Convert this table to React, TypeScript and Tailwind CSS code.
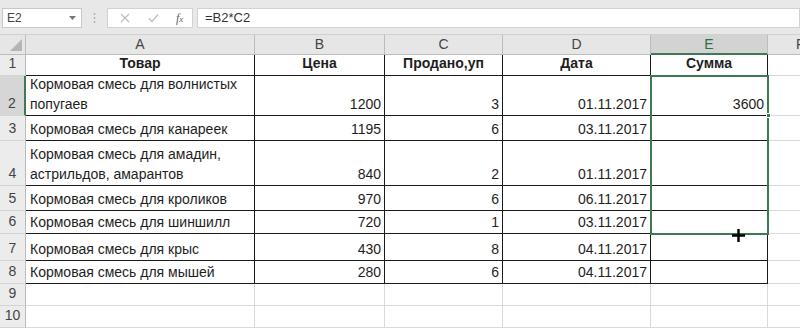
import React from "react";

const cols = ["A", "B", "C", "D", "E"];
const rowHeights = [21, 40, 25, 45, 25, 23, 27, 23, 22, 22];

type Row = { name: string[]; price: string; sold: string; date: string; sum: string };

const data: Row[] = [
  { name: ["Кормовая смесь для волнистых", "попугаев"], price: "1200", sold: "3", date: "01.11.2017", sum: "3600" },
  { name: ["Кормовая смесь для канареек"], price: "1195", sold: "6", date: "03.11.2017", sum: "" },
  { name: ["Кормовая смесь для амадин,", "астрильдов, амарантов"], price: "840", sold: "2", date: "01.11.2017", sum: "" },
  { name: ["Кормовая смесь для кроликов"], price: "970", sold: "6", date: "06.11.2017", sum: "" },
  { name: ["Кормовая смесь для шиншилл"], price: "720", sold: "1", date: "03.11.2017", sum: "" },
  { name: ["Кормовая смесь для крыс"], price: "430", sold: "8", date: "04.11.2017", sum: "" },
  { name: ["Кормовая смесь для мышей"], price: "280", sold: "6", date: "04.11.2017", sum: "" },
];

const headers = ["Товар", "Цена", "Продано,уп", "Дата", "Сумма"];

function RowHeader({ n, active }: { n: number; active?: boolean }) {
  return (
    <div
      className={`flex items-end justify-center border-b border-b-[#d4d4d4] pb-[1px] text-[14px] text-[#444] ${
        active ? "border-r-2 border-r-[#3d7a53] bg-[#d6d6d6]" : "border-r border-r-[#bcbcbc] bg-[#ececec]"
      }`}
    >
      {n}
    </div>
  );
}

export default function App() {
  const gridRows = `35px 20px ${rowHeights.map((h) => h + "px").join(" ")}`;

  return (
    <div
      className="relative h-[329px] w-[800px] overflow-hidden bg-white text-[#1e1e1e]"
      style={{ fontFamily: '"Liberation Sans", Arial, sans-serif' }}
    >
      <div
        className="grid"
        style={{ gridTemplateColumns: "26px 229px 130px 118px 148px 117px 32px", gridTemplateRows: gridRows }}
      >
        {/* Formula bar */}
        <div className="col-span-7 flex items-center gap-0 border-b border-b-[#d0d0d0] bg-[#e8e8e8] pl-[2px] pt-[1px]">
          <div className="flex h-[20px] w-[80px] items-center justify-between border border-[#c8c8c8] bg-white pl-[4px] pr-[5px] text-[12px] text-[#444]">
            <span>E2</span>
            <svg width="7" height="4" viewBox="0 0 7 4">
              <path d="M0 0h7L3.5 4z" fill="#777" />
            </svg>
          </div>
          <div className="flex w-[25px] justify-center">
            <svg width="3" height="12" viewBox="0 0 3 12">
              <circle cx="1.5" cy="2" r="0.9" fill="#aaa" />
              <circle cx="1.5" cy="6" r="0.9" fill="#aaa" />
              <circle cx="1.5" cy="10" r="0.9" fill="#aaa" />
            </svg>
          </div>
          <div className="flex h-[20px] w-[86px] items-center border border-[#d2d2d2] bg-white">
            <svg className="ml-[12px]" width="10" height="10" viewBox="0 0 10 10">
              <path d="M1 1l8 8M9 1l-8 8" stroke="#bdbdbd" strokeWidth="1.2" />
            </svg>
            <svg className="ml-[18px]" width="11" height="10" viewBox="0 0 11 10">
              <path d="M1 5.5l3 3L10 1.5" stroke="#bdbdbd" strokeWidth="1.2" fill="none" />
            </svg>
            <span className="ml-[17px] text-[12px] italic text-[#666]" style={{ fontFamily: '"Liberation Serif", serif' }}>
              f<span className="text-[9px]">x</span>
            </span>
          </div>
          <div className="ml-[4px] flex h-[20px] flex-1 items-center border border-[#d2d2d2] bg-white pl-[7px] text-[13px] text-[#333]">
            =B2*C2
          </div>
        </div>

        {/* Column headers */}
        <div className="relative border-b border-r border-[#bcbcbc] bg-[#e6e6e6]">
          <svg className="absolute bottom-[3px] right-[3px]" width="12" height="12" viewBox="0 0 12 12">
            <path d="M12 0V12H0z" fill="#b5b5b5" />
          </svg>
        </div>
        {cols.map((c) => (
          <div
            key={c}
            className={`flex items-center justify-center border-r text-[14px] ${
              c === "E"
                ? "border-b-2 border-b-[#3d7a53] border-r-[#bcbcbc] bg-[#d3d3d3] text-[#2f6f47]"
                : "border-b border-[#bcbcbc] bg-[#e6e6e6] text-[#444]"
            }`}
          >
            {c}
          </div>
        ))}
        <div className="flex items-center overflow-hidden whitespace-nowrap border-b border-[#bcbcbc] bg-[#e6e6e6] pl-[28px] text-[14px] text-[#444]">
          F
        </div>

        {/* Row 1 */}
        <RowHeader n={1} />
        {headers.map((h) => (
          <div
            key={h}
            className="flex items-end justify-center border-b border-r border-[#1a1a1a] pb-[1px] text-[14px] font-bold"
          >
            {h}
          </div>
        ))}
        <div className="border-b border-[#dadada]" />

        {/* Data rows */}
        {data.map((r, i) => (
          <React.Fragment key={i}>
            <RowHeader n={i + 2} active={i === 0} />
            <div className="flex flex-col justify-end border-b border-r border-[#1a1a1a] pb-[1px] pl-[4px] text-[14px] leading-[20px]">
              {r.name.map((l) => (
                <span key={l}>{l}</span>
              ))}
            </div>
            <div className="flex items-end justify-end border-b border-r border-[#1a1a1a] pb-[1px] pr-[3px] text-[14px] leading-[20px]">
              {r.price}
            </div>
            <div className="flex items-end justify-end border-b border-r border-[#1a1a1a] pb-[1px] pr-[3px] text-[14px] leading-[20px]">
              {r.sold}
            </div>
            <div className="flex items-end justify-end border-b border-r border-[#1a1a1a] pb-[1px] pr-[3px] text-[14px] leading-[20px]">
              {r.date}
            </div>
            <div className="flex items-end justify-end border-b border-r border-[#1a1a1a] pb-[1px] pr-[3px] text-[14px] leading-[20px]">
              {r.sum}
            </div>
            <div className="border-b border-[#dadada]" />
          </React.Fragment>
        ))}

        {/* Empty rows */}
        {[9, 10].map((n) => (
          <React.Fragment key={n}>
            <RowHeader n={n} />
            {cols.map((c) => (
              <div key={c} className="border-b border-r border-[#dadada]" />
            ))}
            <div className="border-b border-[#dadada]" />
          </React.Fragment>
        ))}
      </div>

      {/* Selection outline E2:E6 */}
      <div className="pointer-events-none absolute left-[650px] top-[75px] h-[160px] w-[119px] border-2 border-[#3d7a53]" />
      <div className="pointer-events-none absolute left-[766px] top-[113px] h-[5px] w-[5px] border border-white bg-[#3d7a53]" />

      {/* Cursor */}
      <svg className="pointer-events-none absolute left-[732px] top-[229px]" width="13" height="13" viewBox="0 0 13 13">
        <path d="M6.5 0v13M0 6.5h13" stroke="#000" strokeWidth="2.4" />
      </svg>
    </div>
  );
}
